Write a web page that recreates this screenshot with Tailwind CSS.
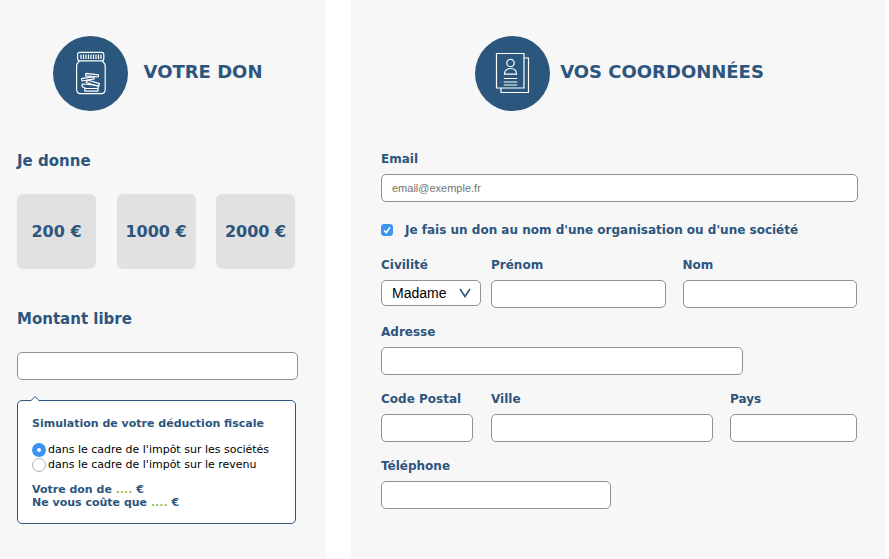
<!DOCTYPE html>
<html lang="fr">
  <head>
    <meta charset="UTF-8" />
    <meta name="viewport" content="width=device-width, initial-scale=1.0" />
    <title>Faire un don</title>
    <script src="https://cdn.jsdelivr.net/npm/@tailwindcss/browser@4"></script>
  </head>
  <body
    class="bg-white text-[#2d557d] font-['Verdana','DejaVu_Sans',sans-serif]"
  >
    <main class="flex min-h-screen gap-[25px] pr-[3px]">
      <!-- Donation -->
      <section class="w-[326px] shrink-0 bg-[#f7f7f7] pl-[17px] pr-7 pt-9">
        <header class="flex items-center justify-center gap-4 pb-[38px]">
          <svg class="size-[75px] shrink-0" viewBox="0 0 75 75" fill="none">
            <circle cx="37.5" cy="37.5" r="37.5" fill="#2b567d" />
            <g stroke="#fff" stroke-width="1.2" stroke-linejoin="round">
              <rect x="24.6" y="16.4" width="26.2" height="8.4" rx="2" />
              <path
                d="M28 18.5v4.5M30.5 18.5v4.500M33 18.5v4.5M35.5 18.5v4.5M38 18.5v4.5M40.5 18.5v4.5M43 18.5v4.5M45.5 18.5v4.5M48 18.5v4.5"
              />
              <path
                d="M26.2 24.8c0 1.7-2.600 2-2.600 5v23.400c0 2.500 1.500 4.400 4 4.400h20.600c2.500 0 4-1.900 4-4.400v-23.400c0-3-2.600-3.300-2.600-5"
              />
              <path d="M33 37.400l12.500 1.400-.3 2.200-12.600-1.200z" />
              <path d="M28.500 42.600l12.300-2 .4 2.200-12.200 2.200z" />
              <path d="M34.500 44l12 3.600-.8 2.400-5-1-7.500-2.600z" />
              <path d="M29.300 48l11.500.8 4.600 1.700-.4 2h-12l-4-2z" />
              <path d="M31.800 52.500h13.200v2.600H31.800z" />
            </g>
          </svg>
          <h1 class="pb-1 text-lg font-bold leading-6">VOTRE DON</h1>
        </header>

        <h2 class="mb-[21px] text-[15px] font-bold leading-6">Je donne</h2>
        <div class="mr-[3px] flex justify-between">
          <button
            type="button"
            class="h-[75px] w-[79px] rounded-md bg-[#e1e1e1] text-base font-bold whitespace-nowrap"
          >
            200 €
          </button>
          <button
            type="button"
            class="h-[75px] w-[79px] rounded-md bg-[#e1e1e1] text-base font-bold whitespace-nowrap"
          >
            1000 €
          </button>
          <button
            type="button"
            class="h-[75px] w-[79px] rounded-md bg-[#e1e1e1] text-base font-bold whitespace-nowrap"
          >
            2000 €
          </button>
        </div>

        <h2 class="mt-[38px] text-[15px] font-bold leading-6">
          <label for="montant">Montant libre</label>
        </h2>
        <input
          type="text"
          id="montant"
          class="mt-[21px] block h-7 w-full rounded-[5px] border border-[#929292] bg-white px-2.5 text-sm"
        />

        <!-- Tax simulation -->
        <div
          class="relative mt-5 mr-0.5 rounded-[5px] border border-[#2d557d] bg-white px-[14px] pt-[15px] pb-[14px] text-[11px]"
        >
          <svg
            class="absolute -top-[5px] left-3 h-[6px] w-[10px]"
            viewBox="0 0 10 6"
          >
            <path d="M0 5.5L5 .7l5 4.8V6H0z" fill="#fff" />
            <path d="M.5 5L5 .7 9.5 5" fill="none" stroke="#2d557d" />
          </svg>
          <h3 class="font-bold leading-4">Simulation de votre déduction fiscale</h3>
          <div class="mt-[10px] text-black">
            <label class="flex items-center gap-0.5 leading-[15px]">
              <input
                type="radio"
                name="cadre"
                class="size-[14px] shrink-0 appearance-none rounded-full border border-[#b4b4b4] bg-white checked:border-[5px] checked:border-[#3b93f0]"
                checked
              />
              <span class="whitespace-nowrap">dans le cadre de l'impôt sur les sociétés</span>
            </label>
            <label class="flex items-center gap-0.5 leading-[15px]">
              <input
                type="radio"
                name="cadre"
                class="size-[14px] shrink-0 appearance-none rounded-full border border-[#b4b4b4] bg-white checked:border-[5px] checked:border-[#3b93f0]"
              />
              <span class="whitespace-nowrap">dans le cadre de l'impôt sur le revenu</span>
            </label>
          </div>
          <p class="mt-[11px] font-bold leading-[13px]">
            Votre don de <span class="text-[#a3bf5f]">....</span> €<br />
            Ne vous coûte que <span class="text-[#a3bf5f]">....</span> €
          </p>
        </div>
      </section>

      <!-- Contact details -->
      <section class="flex-1 bg-[#f7f7f7] pl-[30px] pr-7 pt-9 text-xs font-bold">
        <header class="flex items-center justify-center gap-[10px] pb-10">
          <svg class="size-[75px] shrink-0" viewBox="0 0 75 75" fill="none">
            <circle cx="37.5" cy="37.5" r="37.5" fill="#2b567d" />
            <g stroke="#fff" stroke-width="1.2">
              <path d="M21.5 17.500h27.5v34.5H21.5z" />
              <path d="M49 22h4.500v34.500H26V52" />
              <circle cx="35.5" cy="27" r="3.700" />
              <path d="M29.5 38.200c0-3.800 2.500-5.700 6-5.700s6 1.900 6 5.700z" />
              <path d="M28.800 42.500h13.400M28.800 46h13.400M28.800 49h13.400" />
            </g>
          </svg>
          <h1 class="pb-1 text-lg font-bold leading-6">VOS COORDONNÉES</h1>
        </header>

        <form>
          <label for="email" class="block leading-4">Email</label>
          <input
            type="email"
            id="email"
            placeholder="email@exemple.fr"
            class="mt-[7px] block h-7 w-full rounded-[5px] border border-[#929292] bg-white px-2.5 font-['Liberation_Sans',sans-serif] text-[11px] font-normal placeholder:text-[#757575]"
          />

          <div class="mt-5 flex items-center gap-3 leading-4">
            <span class="relative flex">
              <input
                type="checkbox"
                id="organisation"
                class="size-3 appearance-none rounded-[3px] border border-[#a0a0a0] bg-white checked:border-[#3b93f0] checked:bg-[#3b93f0]"
                checked
              />
              <svg
                class="pointer-events-none absolute inset-0 size-3"
                viewBox="0 0 12 12"
              >
                <path d="M3 6.3L5.2 8.7 9 3.3" fill="none" stroke="#fff" stroke-width="1.5" />
              </svg>
            </span>
            <label for="organisation">Je fais un don au nom d'une organisation ou d'une société</label>
          </div>

          <div class="mt-[19px] flex">
            <div class="mr-[10px] w-[100px] shrink-0">
              <label for="civilite" class="block leading-4">Civilité</label>
              <div class="relative mt-[7px]">
                <select
                  id="civilite"
                  class="block h-[26px] w-full appearance-none rounded-[5px] border border-[#929292] bg-white pl-2.5 font-['Liberation_Sans',sans-serif] text-sm font-normal text-black"
                >
                  <option>Madame</option>
                  <option>Monsieur</option>
                </select>
                <svg
                  class="pointer-events-none absolute top-2 right-[10px] h-[10px] w-3"
                  viewBox="0 0 12 10"
                >
                  <path d="M1 1l5 7.5L11 1" fill="none" stroke="#2d557d" stroke-width="1.6" />
                </svg>
              </div>
            </div>
            <div class="mr-[17px] flex-1">
              <label for="prenom" class="block leading-4">Prénom</label>
              <input
                type="text"
                id="prenom"
                class="mt-[7px] block h-7 w-full rounded-[5px] border border-[#929292] bg-white px-2.5 font-normal"
              />
            </div>
            <div class="mr-px flex-1">
              <label for="nom" class="block leading-4">Nom</label>
              <input
                type="text"
                id="nom"
                class="mt-[7px] block h-7 w-full rounded-[5px] border border-[#929292] bg-white px-2.5 font-normal"
              />
            </div>
          </div>

          <label for="adresse" class="mt-4 block leading-4">Adresse</label>
          <input
            type="text"
            id="adresse"
            class="mt-[7px] block h-7 w-[362px] rounded-[5px] border border-[#929292] bg-white px-2.5 font-normal"
          />

          <div class="mt-4 flex">
            <div class="mr-[18px] w-[92px] shrink-0">
              <label for="cp" class="block leading-4 whitespace-nowrap">Code Postal</label>
              <input
                type="text"
                id="cp"
                class="mt-[7px] block h-7 w-full rounded-[5px] border border-[#929292] bg-white px-2.5 font-normal"
              />
            </div>
            <div class="mr-[17px] flex-1">
              <label for="ville" class="block leading-4">Ville</label>
              <input
                type="text"
                id="ville"
                class="mt-[7px] block h-7 w-full rounded-[5px] border border-[#929292] bg-white px-2.5 font-normal"
              />
            </div>
            <div class="mr-px w-[127px] shrink-0">
              <label for="pays" class="block leading-4">Pays</label>
              <input
                type="text"
                id="pays"
                class="mt-[7px] block h-7 w-full rounded-[5px] border border-[#929292] bg-white px-2.5 font-normal"
              />
            </div>
          </div>

          <label for="telephone" class="mt-4 block leading-4">Téléphone</label>
          <input
            type="tel"
            id="telephone"
            class="mt-[7px] block h-7 w-[230px] rounded-[5px] border border-[#929292] bg-white px-2.5 font-normal"
          />
        </form>
      </section>
    </main>
  </body>
</html>
